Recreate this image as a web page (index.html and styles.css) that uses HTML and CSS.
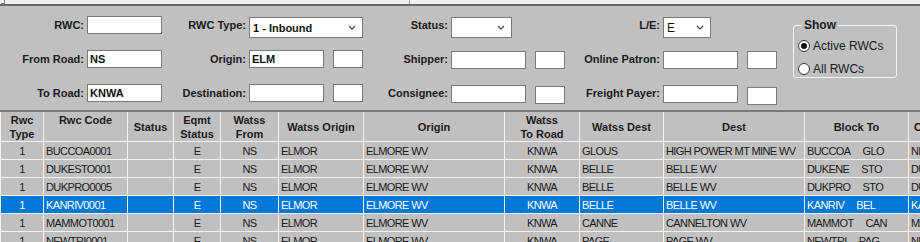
FILE: index.html
```html
<!DOCTYPE html>
<html lang="en">
<head>
    <meta charset="UTF-8">
    <title>RWC Maintenance</title>
    <link rel="stylesheet" href="styles.css">
</head>
<body>

<div class="top-strip">
    <span class="corner"></span>
    <span class="split"></span>
</div>

<div class="filter-panel">
    <div class="filter-grid">
        <!-- row 1 -->
        <label class="flabel">RWC:</label>
        <div class="field"><input class="txt" type="text" value=""></div>
        <label class="flabel">RWC Type:</label>
        <div class="field">
            <div class="drop w-type"><span class="drop-val">1 - Inbound</span><svg class="chev" width="8" height="5" viewBox="0 0 8 5"><path d="M1 1 L4 4 L7 1" fill="none" stroke="#555" stroke-width="1.3"/></svg></div>
        </div>
        <label class="flabel">Status:</label>
        <div class="field">
            <div class="drop w-status"><span class="drop-val"></span><svg class="chev" width="8" height="5" viewBox="0 0 8 5"><path d="M1 1 L4 4 L7 1" fill="none" stroke="#555" stroke-width="1.3"/></svg></div>
        </div>
        <label class="flabel">L/E:</label>
        <div class="field">
            <div class="drop w-le"><span class="drop-val plain">E</span><svg class="chev" width="8" height="5" viewBox="0 0 8 5"><path d="M1 1 L4 4 L7 1" fill="none" stroke="#555" stroke-width="1.3"/></svg></div>
        </div>

        <!-- row 2 -->
        <label class="flabel">From Road:</label>
        <div class="field"><input class="txt" type="text" value="NS"></div>
        <label class="flabel">Origin:</label>
        <div class="field"><input class="txt" type="text" value="ELM"><input class="txt small" type="text"></div>
        <label class="flabel">Shipper:</label>
        <div class="field low"><input class="txt" type="text"><input class="txt small" type="text"></div>
        <label class="flabel">Online Patron:</label>
        <div class="field low"><input class="txt" type="text"><input class="txt small" type="text"></div>

        <!-- row 3 -->
        <label class="flabel">To Road:</label>
        <div class="field"><input class="txt" type="text" value="KNWA"></div>
        <label class="flabel">Destination:</label>
        <div class="field"><input class="txt" type="text"><input class="txt small" type="text"></div>
        <label class="flabel">Consignee:</label>
        <div class="field low"><input class="txt" type="text"><input class="txt small lower" type="text"></div>
        <label class="flabel">Freight Payer:</label>
        <div class="field low"><input class="txt" type="text"><input class="txt small lower2" type="text"></div>
    </div>

    <fieldset class="show-box">
        <legend>Show</legend>
        <label class="opt"><input type="radio" name="show" checked> Active RWCs</label>
        <label class="opt"><input type="radio" name="show"> All RWCs</label>
    </fieldset>
</div>

<div class="grid-wrap">
    <table class="rwc-grid">
        <colgroup>
            <col style="width:43px"><col style="width:84px"><col style="width:46px"><col style="width:47px">
            <col style="width:58px"><col style="width:85px"><col style="width:141px"><col style="width:75px">
            <col style="width:84px"><col style="width:141px"><col style="width:104px"><col style="width:80px">
        </colgroup>
        <thead>
            <tr>
                <th>Rwc<br>Type</th>
                <th class="top">Rwc Code</th>
                <th>Status</th>
                <th>Eqmt<br>Status</th>
                <th>Watss<br>From</th>
                <th>Watss Origin</th>
                <th>Origin</th>
                <th>Watss<br>To Road</th>
                <th>Watss Dest</th>
                <th>Dest</th>
                <th>Block To</th>
                <th class="cut">Consist To</th>
            </tr>
        </thead>
        <tbody>
            <tr>
                <td class="c">1</td><td>BUCCOA0001</td><td></td><td class="c">E</td><td class="c">NS</td><td>ELMOR</td>
                <td>ELMORE WV</td><td class="c">KNWA</td><td>GLOUS</td><td>HIGH POWER MT MINE WV</td>
                <td>BUCCOA<span class="blk">GLO</span></td><td>NITRO</td>
            </tr>
            <tr>
                <td class="c">1</td><td>DUKESTO001</td><td></td><td class="c">E</td><td class="c">NS</td><td>ELMOR</td>
                <td>ELMORE WV</td><td class="c">KNWA</td><td>BELLE</td><td>BELLE WV</td>
                <td>DUKENE<span class="blk">STO</span></td><td>DUKENE</td>
            </tr>
            <tr>
                <td class="c">1</td><td>DUKPRO0005</td><td></td><td class="c">E</td><td class="c">NS</td><td>ELMOR</td>
                <td>ELMORE WV</td><td class="c">KNWA</td><td>BELLE</td><td>BELLE WV</td>
                <td>DUKPRO<span class="blk">STO</span></td><td>DUKPRO</td>
            </tr>
            <tr class="selected">
                <td class="c">1</td><td>KANRIV0001</td><td></td><td class="c">E</td><td class="c">NS</td><td>ELMOR</td>
                <td>ELMORE WV</td><td class="c">KNWA</td><td>BELLE</td><td>BELLE WV</td>
                <td>KANRIV<span class="blk">BEL</span></td><td>KANRIV</td>
            </tr>
            <tr>
                <td class="c">1</td><td>MAMMOT0001</td><td></td><td class="c">E</td><td class="c">NS</td><td>ELMOR</td>
                <td>ELMORE WV</td><td class="c">KNWA</td><td>CANNE</td><td>CANNELTON WV</td>
                <td>MAMMOT<span class="blk">CAN</span></td><td>MAMMOT</td>
            </tr>
            <tr>
                <td class="c">1</td><td>NEWTRI0001</td><td></td><td class="c">E</td><td class="c">NS</td><td>ELMOR</td>
                <td>ELMORE WV</td><td class="c">KNWA</td><td>PAGE</td><td>PAGE WV</td>
                <td>NEWTRI<span class="blk">PAG</span></td><td>NEWTRI</td>
            </tr>
        </tbody>
    </table>
</div>

</body>
</html>
```

FILE: styles.css
```css
body {
    margin: 0;
    width: 920px;
    height: 242px;
    overflow: hidden;
    background-color: #c0c0c0;
    font-family: "Liberation Sans", Arial, sans-serif;
    color: #1a1a1a;
}
.top-strip {
    height: 4px;
    background-color: #f0f0f0;
    border-bottom: 2px solid #6a6a6a;
    display: flex;
}
.top-strip .corner {
    width: 3px;
    height: 3px;
    border-right: 1px solid #888;
    border-bottom: 1px solid #888;
    margin-left: 1px;
}
.top-strip .split {
    width: 1px;
    background-color: #a0a0a0;
    margin-left: 404px;
}
.filter-panel {
    height: 104px;
    background-color: #c0c0c0;
    border-bottom: 2px solid #7a7a7a;
    display: flex;
    align-items: flex-start;
}
.filter-grid {
    display: grid;
    grid-template-columns: 87px 77px 85px 117px 85px 115px 97px 127px;
    grid-auto-rows: 34px;
    padding-top: 10px;
}
.flabel {
    font-size: 11px;
    font-weight: bold;
    text-align: right;
    padding-right: 3px;
    line-height: 18px;
    white-space: nowrap;
}
.field {
    display: flex;
    gap: 9px;
    align-items: flex-start;
}
.field.low {
    padding-top: 1px;
}
.txt {
    width: 75px;
    height: 18px;
    box-sizing: border-box;
    border: 1px solid #7a7a7a;
    background-color: #fff;
    padding: 0 2px;
    margin: 0;
    font-family: "Liberation Sans", Arial, sans-serif;
    font-size: 11px;
    font-weight: bold;
    color: #111;
    outline: none;
}
.txt.small {
    width: 30px;
}
.txt.lower {
    margin-top: 1px;
}
.txt.lower2 {
    margin-top: 2px;
}
.drop {
    height: 21px;
    box-sizing: border-box;
    border: 1px solid #7a7a7a;
    background-color: #fff;
    display: flex;
    align-items: center;
    justify-content: space-between;
    padding: 0 6px 0 3px;
    margin-top: 1px;
}
.drop-val {
    font-size: 11px;
    font-weight: bold;
    color: #111;
}
.drop-val.plain {
    font-weight: normal;
    font-size: 12px;
}
.w-type { width: 114px; }
.w-status { width: 61px; }
.w-le { width: 48px; }
.show-box {
    margin: 12px 0 0 3px;
    padding: 2px 0 0 4px;
    width: 104px;
    height: 60px;
    box-sizing: border-box;
    border: 1px solid #f4f4f4;
    border-radius: 3px;
}
.show-box legend {
    font-size: 12px;
    font-weight: bold;
    padding: 0 2px;
    margin-left: 4px;
    line-height: 14px;
}
.opt {
    display: flex;
    align-items: center;
    font-size: 12px;
    height: 23px;
    color: #1a1a1a;
}
.opt input {
    appearance: none;
    width: 12px;
    height: 12px;
    margin: 0 3px 0 0;
    border: 1px solid #333;
    border-radius: 50%;
    background-color: #fff;
    box-sizing: border-box;
    position: relative;
}
.opt input:checked::after {
    content: "";
    position: absolute;
    left: 2px;
    top: 2px;
    width: 6px;
    height: 6px;
    border-radius: 50%;
    background-color: #111;
}
.grid-wrap {
    width: 920px;
    overflow: hidden;
}
.rwc-grid {
    width: 988px;
    table-layout: fixed;
    border-collapse: collapse;
    font-size: 11px;
    letter-spacing: -0.6px;
}
.rwc-grid th {
    height: 28px;
    padding: 0;
    line-height: 14px;
    font-weight: bold;
    letter-spacing: 0;
    text-align: center;
    vertical-align: middle;
    border: 1px solid #f2f2f2;
    border-top: none;
    white-space: nowrap;
    overflow: hidden;
}
.rwc-grid th.top {
    vertical-align: top;
    padding-top: 1px;
}
.rwc-grid th.cut {
    text-align: left;
    padding-left: 5px;
}
.rwc-grid td {
    height: 17px;
    padding: 0 0 0 2px;
    border: 1px solid #f2f2f2;
    white-space: nowrap;
    overflow: hidden;
    color: #1a1a1a;
}
.rwc-grid td.c {
    text-align: center;
    padding: 0;
}
.rwc-grid tr.selected td {
    background-color: #0078d7;
    color: #fff;
}
.blk {
    margin-left: 12px;
}
```
